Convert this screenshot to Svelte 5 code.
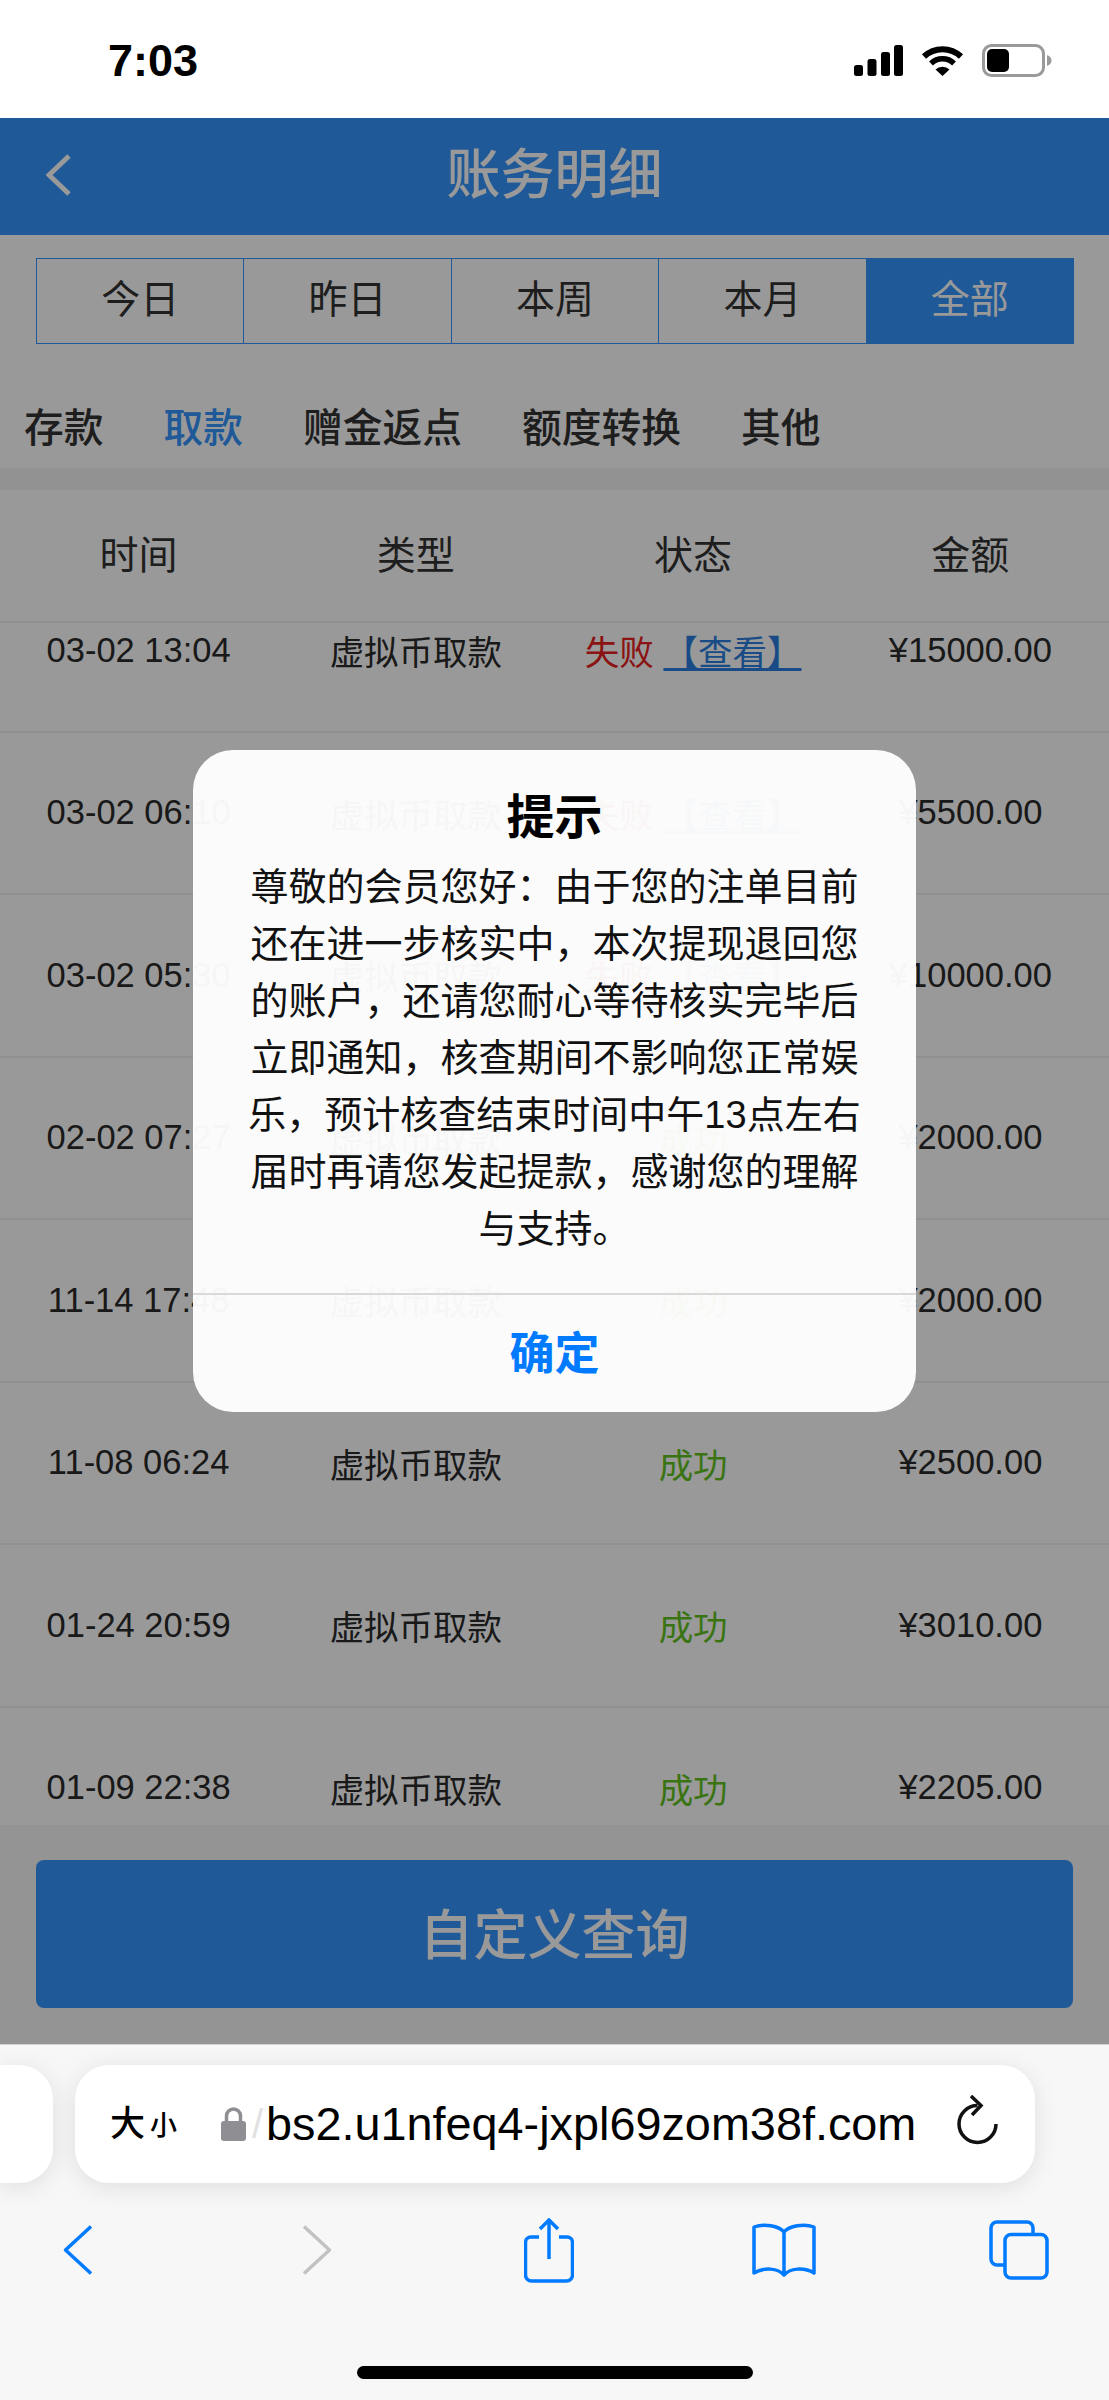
<script>
  const ranges = ['今日', '昨日', '本周', '本月', '全部'];
  const kinds = ['存款', '取款', '赠金返点', '额度转换', '其他'];
  const heads = ['时间', '类型', '状态', '金额'];
  const rows = [
    { time: '03-02 13:04', ok: false, amount: '¥15000.00' },
    { time: '03-02 06:10', ok: false, amount: '¥5500.00' },
    { time: '03-02 05:30', ok: false, amount: '¥10000.00' },
    { time: '02-02 07:27', ok: true, amount: '¥2000.00' },
    { time: '11-14 17:48', ok: true, amount: '¥2000.00' },
    { time: '11-08 06:24', ok: true, amount: '¥2500.00' },
    { time: '01-24 20:59', ok: true, amount: '¥3010.00' },
    { time: '01-09 22:38', ok: true, amount: '¥2205.00' }
  ];
  const message = [
    '尊敬的会员您好：由于您的注单目前',
    '还在进一步核实中，本次提现退回您',
    '的账户，还请您耐心等待核实完毕后',
    '立即通知，核查期间不影响您正常娱',
    '乐，预计核查结束时间中午13点左右',
    '届时再请您发起提款，感谢您的理解',
    '与支持。'
  ];
</script>

<div class="phone">
  <div class="status">
    <span class="clock">7:03</span>
    <div class="status-icons">
      <svg width="49" height="31" viewBox="0 0 49 31"><rect x="0" y="20" width="9" height="11" rx="2.5"/><rect x="13.5" y="14" width="9" height="17" rx="2.5"/><rect x="27" y="7" width="9" height="24" rx="2.5"/><rect x="40" y="0" width="9" height="31" rx="2.5"/></svg>
      <svg width="43" height="31" viewBox="0 0 43 31"><path d="M3 11.5A27 27 0 0 1 40 11.5" fill="none" stroke="#000" stroke-width="6"/><path d="M10 18.5A16.5 16.5 0 0 1 33 18.5" fill="none" stroke="#000" stroke-width="5.5"/><path d="M21.5 31L14.5 24.5A10 10 0 0 1 28.5 24.5Z"/></svg>
      <svg width="70" height="33" viewBox="0 0 70 33"><rect x="1.5" y="1.5" width="60" height="30" rx="8" fill="none" stroke="#9a9a9a" stroke-width="3"/><rect x="5" y="5" width="22" height="23" rx="5"/><path d="M65 11C68 12 69.500 14 69.500 16.500C69.500 19 68 21 65 22Z" fill="#9a9a9a"/></svg>
    </div>
  </div>

  <div class="page">
    <header class="topbar">
      <svg class="back" width="26" height="42" viewBox="0 0 26 42"><path d="M23 2L3 21L23 40" fill="none" stroke="#fff" stroke-width="5"/></svg>
      <h1>账务明细</h1>
    </header>

    <div class="ranges">
      {#each ranges as r, i}
        <button class:active={i === 4}>{r}</button>
      {/each}
    </div>

    <nav class="kinds">
      {#each kinds as k, i}
        <span class:current={i === 1}>{k}</span>
      {/each}
    </nav>

    <div class="band"></div>

    <div class="thead">
      {#each heads as h}
        <span>{h}</span>
      {/each}
    </div>

    <div class="tbody">
      <div class="scroller">
        {#each rows as row}
          <div class="row">
            <span>{row.time}</span>
            <span>虚拟币取款</span>
            <span>
              {#if row.ok}
                <em class="ok">成功</em>
              {:else}
                <em class="fail">失败</em> <a href="#view">【查看】</a>
              {/if}
            </span>
            <span>{row.amount}</span>
          </div>
        {/each}
      </div>
    </div>

    <div class="footer">
      <button class="custom">自定义查询</button>
    </div>

    <div class="overlay">
      <div class="dialog">
        <h2>提示</h2>
        <p>
          {#each message as line}
            <span>{line}</span>
          {/each}
        </p>
        <div class="confirm">确定</div>
      </div>
    </div>
  </div>

  <div class="chrome">
    <div class="address-row">
      <div class="prev-tab"></div>
      <div class="address">
        <span class="aa"><b>大</b><small>小</small></span>
        <svg class="lock" width="25" height="34" viewBox="0 0 25 34"><path d="M5.500 16V9a7 7 0 0 1 14 0V16" fill="none" stroke="#8e8e93" stroke-width="3.500"/><rect x="0" y="14" width="25" height="20" rx="3" fill="#8e8e93"/></svg>
        <span class="slash">/</span>
        <span class="url">bs2.u1nfeq4-jxpl69zom38f.com</span>
        <svg class="reload" width="42" height="50" viewBox="0 0 42 50"><path d="M39 29A18.500 18.500 0 1 1 20.500 10.500" fill="none" stroke="#111" stroke-width="3.500"/><path d="M14 1L24 10.500L15 20" fill="none" stroke="#111" stroke-width="3.500"/></svg>
      </div>
    </div>

    <div class="toolbar">
      <div class="tool"><svg width="30" height="50" viewBox="0 0 30 50"><path d="M28 1.500L2.500 25L28 48.500" fill="none" stroke="#007aff" stroke-width="3.500" stroke-linejoin="round"/></svg></div>
      <div class="tool forward"><svg width="30" height="50" viewBox="0 0 30 50"><path d="M2 1.500L27.500 25L2 48.500" fill="none" stroke="#c2c2c2" stroke-width="3.500" stroke-linejoin="round"/></svg></div>
      <div class="tool"><svg width="50" height="65" viewBox="0 0 50 65"><g fill="none" stroke="#007aff" stroke-width="3.500"><path d="M15 19H7a5.500 5.500 0 0 0-5.500 5.500V57A6 6 0 0 0 7.500 63H42.500A6 6 0 0 0 48.500 57V24.500A5.500 5.500 0 0 0 43 19H35"/><path d="M25 41V2"/><path d="M16 11L25 2L34 11"/></g></svg></div>
      <div class="tool"><svg width="64" height="54" viewBox="0 0 64 54"><g fill="none" stroke="#007aff" stroke-width="3.500" stroke-linejoin="round"><path d="M32 9C27 3 12 0 2 4V50C12 44 26 45 32 52C38 45 52 44 62 50V4C52 0 37 3 32 9V52"/></g></svg></div>
      <div class="tool"><svg width="60" height="60" viewBox="0 0 60 60"><g fill="none" stroke="#007aff" stroke-width="3.500"><path d="M15 45H8a6 6 0 0 1-6-6V8a6 6 0 0 1 6-6H38a6 6 0 0 1 6 6V14"/><rect x="16" y="14.500" width="42" height="43.500" rx="6"/></g></svg></div>
    </div>

    <div class="home-bar"></div>
  </div>
</div>

<style>
  :global(body) { margin: 0; background: #fff; }
  .phone {
    width: 1109px;
    height: 2400px;
    display: flex;
    flex-direction: column;
    overflow: hidden;
    font-family: "Liberation Sans", "Noto Sans CJK SC", sans-serif;
    color: #333;
  }

  .status { height: 118px; flex: none; display: flex; align-items: flex-start; justify-content: space-between; box-sizing: border-box; padding: 0 57px 0 108px; background: #fff; }
  .clock { margin-top: 36px; font-size: 45px; line-height: 50px; font-weight: 700; color: #000; }
  .status-icons { display: flex; align-items: center; gap: 18px; margin-top: 44px; }
  .status-icons svg { display: block; }

  .page { position: relative; flex: none; height: 1926px; display: flex; flex-direction: column; background: #fff; }

  .topbar { position: relative; height: 117px; flex: none; background: #3494fd; display: flex; align-items: center; justify-content: center; }
  .topbar h1 { margin: 0 0 3px; font-size: 54px; font-weight: 500; color: #fff; line-height: 70px; }
  .back { position: absolute; left: 46px; top: 36px; }

  .ranges { display: flex; flex: none; height: 86px; margin: 23px 35px 0 36px; border: 1.500px solid #3494fd; box-sizing: border-box; }
  .ranges button { flex: 1; border: 0; border-left: 1.500px solid #3494fd; background: none; padding: 0 0 10px; font: inherit; font-size: 39px; color: #333; }
  .ranges button:first-child { border-left: 0; }
  .ranges .active { background: #3494fd; color: #fff; }

  .kinds { display: flex; flex: none; gap: 60px; height: 80px; margin-top: 44px; padding-left: 24px; font-size: 39.750px; line-height: 80px; font-weight: 500; color: #333; }
  .kinds .current { color: #3494fd; }

  .band { height: 22px; flex: none; background: #f3f3f3; }

  .thead, .row { display: grid; grid-template-columns: repeat(4, 1fr); text-align: center; }
  .thead { flex: none; height: 133px; align-items: center; padding-bottom: 8px; box-sizing: border-box; font-size: 39px; color: #333; border-bottom: 2px solid #f2f2f2; }

  .tbody { flex: 1; min-height: 0; overflow: hidden; }
  .scroller { margin-top: -53px; }
  .row { height: 162.500px; align-items: center; box-sizing: border-box; border-bottom: 2px solid #f0f0f0; font-size: 34.500px; color: #2b2b2b; white-space: nowrap; }
  .row em { font-style: normal; }
  .fail { color: #e62020; }
  .ok { color: #62c21e; }
  .row a { color: #2a7fe0; text-decoration: underline; text-decoration-thickness: 3px; text-underline-offset: 3px; }

  .footer { flex: none; height: 219px; box-sizing: border-box; padding: 35px 36px 36px 36px; background: #f7f7f7; }
  .custom { display: block; width: 100%; height: 148px; border: 0; border-radius: 8px; background: #3494fd; color: #fff; padding: 0 0 6px; font: inherit; font-size: 54px; font-weight: 500; }

  .overlay { position: absolute; inset: 0; background: rgba(0, 0, 0, 0.4); display: flex; align-items: center; justify-content: center; }
  .dialog { width: 723px; box-sizing: border-box; padding-top: 38px; border-radius: 40px; background: rgba(255, 255, 255, 0.96); text-align: center; color: #000; }
  .dialog h2 { margin: 0 0 11px; font-size: 48px; line-height: 60px; font-weight: 700; }
  .dialog p { margin: 0 0 35px; font-size: 38px; line-height: 57px; color: #111; }
  .dialog p span { display: block; white-space: nowrap; }
  .confirm { height: 119px; border-top: 2px solid #d9d9d9; box-sizing: border-box; line-height: 120px; font-size: 45px; font-weight: 700; color: #007aff; }

  .chrome { flex: 1; background: #f7f7f7; border-top: 1px solid #d4d4d4; box-sizing: border-box; padding-top: 20px; }
  .address-row { display: flex; gap: 22px; height: 118px; }
  .prev-tab { width: 53px; background: #fff; border-radius: 0 34px 34px 0; box-shadow: 0 4px 24px rgba(0, 0, 0, 0.1); }
  .address { width: 960px; box-sizing: border-box; padding: 0 36px 0 35px; display: flex; align-items: center; background: #fff; border-radius: 34px; box-shadow: 0 4px 24px rgba(0, 0, 0, 0.1); color: #000; }
  .aa { display: flex; align-items: flex-end; gap: 5px; width: 65px; line-height: 40px; }
  .aa b { font-size: 35px; font-weight: 500; }
  .aa small { font-size: 27px; line-height: 36px; font-weight: 500; }
  .lock { margin-left: 46px; flex: none; }
  .slash { width: 20px; padding-left: 6px; box-sizing: border-box; font-size: 40px; color: #e2e2e2; }
  .url { font-size: 46.800px; line-height: 56px; white-space: nowrap; color: #000; }
  .reload { margin-left: auto; flex: none; margin-top: -8px; }

  .toolbar { display: flex; justify-content: space-between; height: 70px; margin-top: 32px; padding: 0 40px 0 28px; }
  .tool { width: 100px; display: flex; align-items: center; justify-content: center; }
  .tool svg { display: block; }
  .forward svg { margin-left: 8px; }
  .home-bar { width: 396px; height: 13px; margin: 81px 0 0 357px; border-radius: 7px; background: #000; }
</style>
